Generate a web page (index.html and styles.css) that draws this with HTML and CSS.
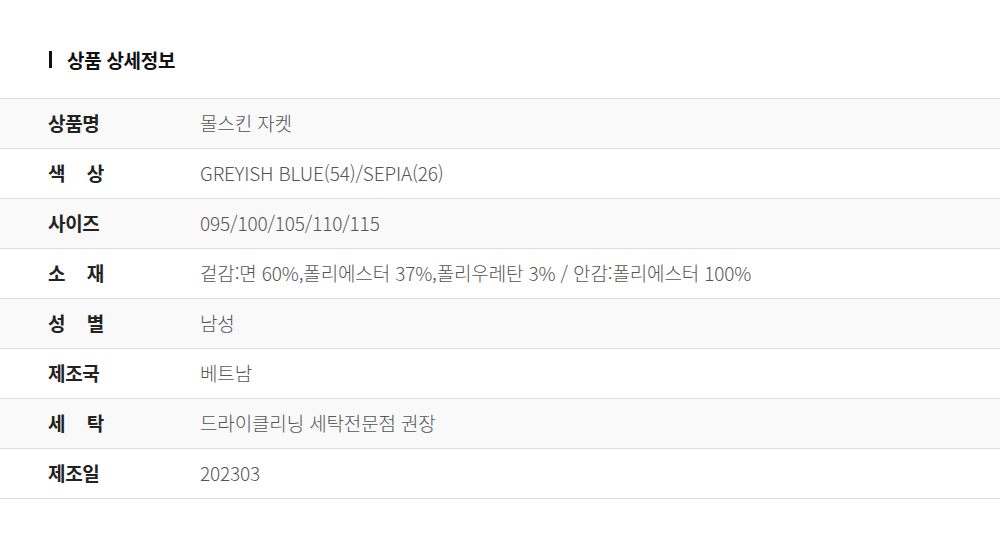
FILE: index.html
```html
<!DOCTYPE html>
<html lang="ko">
<head>
<meta charset="utf-8">
<link rel="stylesheet" href="styles.css">
</head>
<body>
<div class="wrap">
  <h2 class="title">상품 상세정보</h2>
  <div class="table">
    <div class="row alt"><div class="label">상품명</div><div class="value">몰스킨 자켓</div></div>
    <div class="row"><div class="label spread"><span>색</span><span>상</span></div><div class="value">GREYISH BLUE(54)/SEPIA(26)</div></div>
    <div class="row alt"><div class="label">사이즈</div><div class="value">095/100/105/110/115</div></div>
    <div class="row"><div class="label spread"><span>소</span><span>재</span></div><div class="value">겉감:면 60%,폴리에스터 37%,폴리우레탄 3% / 안감:폴리에스터 100%</div></div>
    <div class="row alt"><div class="label spread"><span>성</span><span>별</span></div><div class="value">남성</div></div>
    <div class="row"><div class="label">제조국</div><div class="value">베트남</div></div>
    <div class="row alt"><div class="label spread"><span>세</span><span>탁</span></div><div class="value">드라이클리닝 세탁전문점 권장</div></div>
    <div class="row"><div class="label">제조일</div><div class="value">202303</div></div>
  </div>
</div>
</body>
</html>
```
FILE: styles.css
```css
html, body {
  margin: 0;
  padding: 0;
  background: #fff;
}
body {
  font-family: "Noto Sans CJK KR", "Noto Sans", sans-serif;
  color: #222;
}
.wrap {
  padding-top: 51px;
}
.title {
  margin: 0 0 30px 49px;
  padding-left: 15px;
  border-left: 3px solid #111;
  font-size: 19px;
  font-weight: 700;
  line-height: 17px;
  height: 17px;
  display: flex;
  align-items: center;
  color: #111;
  letter-spacing: -0.3px;
}
.table {
  border-top: 1px solid #dcdcdc;
}
.row {
  display: grid;
  grid-template-columns: 152px 1fr;
  height: 47px;
  padding-bottom: 2px;
  align-items: center;
  padding-left: 48px;
  border-bottom: 1px solid #dcdcdc;
  background: #fff;
}
.row.alt {
  background: #f9f9f9;
}
.label {
  font-size: 19px;
  font-weight: 700;
  color: #222;
  line-height: 24px;
  letter-spacing: -0.3px;
}
.label.spread {
  width: 56px;
  display: flex;
  justify-content: space-between;
}
.value {
  font-size: 19px;
  font-weight: 300;
  color: #555;
  letter-spacing: -0.15px;
  line-height: 24px;
}
```
